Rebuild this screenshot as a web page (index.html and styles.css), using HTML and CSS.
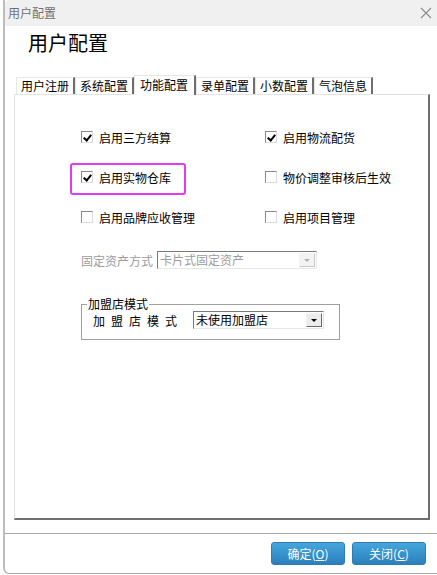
FILE: index.html
```html
<!DOCTYPE html>
<html lang="zh-CN">
<head>
<meta charset="utf-8">
<title>用户配置</title>
<link rel="stylesheet" href="styles.css">
</head>
<body>
<div class="window">
  <div class="titlebar">
    <span class="title">用户配置</span>
    <svg class="close" width="12" height="12" viewBox="0 0 12 12"><path d="M1 1 L11 11 M11 1 L1 11" stroke="#8a8a8a" stroke-width="1.1" fill="none"/></svg>
  </div>
  <div class="heading">用户配置</div>
  <div class="tabs">
    <div class="tab">用户注册</div>
    <div class="tab">系统配置</div>
    <div class="tab active">功能配置</div>
    <div class="tab">录单配置</div>
    <div class="tab">小数配置</div>
    <div class="tab">气泡信息</div>
  </div>
  <div class="panel">
    <div class="grid">
      <label class="opt"><span class="cb on"></span>启用三方结算</label>
      <label class="opt"><span class="cb on"></span>启用物流配货</label>
      <label class="opt mark"><span class="cb on"></span>启用实物仓库</label>
      <label class="opt"><span class="cb"></span>物价调整审核后生效</label>
      <label class="opt"><span class="cb"></span>启用品牌应收管理</label>
      <label class="opt"><span class="cb"></span>启用项目管理</label>
    </div>
    <div class="asset-row">
      <span class="asset-label">固定资产方式</span>
      <div class="select disabled asset-select">
        <span class="select-text">卡片式固定资产</span>
        <span class="drop"><span class="tri"></span></span>
      </div>
    </div>
    <fieldset class="group">
      <legend>加盟店模式</legend>
      <div class="group-row">
        <span class="group-label">加 盟 店 模 式</span>
        <div class="select join-select">
          <span class="select-text">未使用加盟店</span>
          <span class="drop"><span class="tri"></span></span>
        </div>
      </div>
    </fieldset>
  </div>
  <div class="footer">
    <button class="btn">确定(<u>O</u>)</button>
    <button class="btn">关闭(<u>C</u>)</button>
  </div>
</div>
</body>
</html>
```
FILE: styles.css
```css
* { box-sizing: border-box; }
html, body { margin: 0; padding: 0; background: #fff; }
body {
  font-family: "Noto Sans CJK SC", "Liberation Sans", sans-serif;
  font-size: 12px;
  color: #000;
}
.window {
  margin-left: 3px;
  width: 434px;
  height: 574px;
  border-left: 2px solid #bdbdbd;
  border-bottom: 1px solid #a8a8a8;
  border-bottom-left-radius: 6px;
  display: flex;
  flex-direction: column;
  overflow: hidden;
}
.titlebar {
  height: 26px;
  background: #f0f0f0;
  display: flex;
  align-items: center;
  justify-content: space-between;
  padding: 0 5px 0 3px;
  border-top-left-radius: 5px;
}
.title { color: #707070; font-size: 12px; line-height: 12px; }
.close { display: block; margin-top: -1px; }
.heading {
  margin: 7px 0 0 23px;
  font-size: 20px;
  line-height: 20px;
  height: 20px;
}
.tabs {
  margin: 22px 0 0 9px;
  padding-left: 2px;
  height: 19px;
  display: flex;
  align-items: flex-end;
}
.tab {
  height: 17px;
  line-height: 16px;
  padding: 0 4px 0 4px;
  border-left: 1px solid #e6e6e6;
  border-top: 1px solid #e6e6e6;
  border-right: 2px solid #6e6e6e;
  white-space: nowrap;
}
.tab.active {
  height: 20px;
  margin-bottom: -1px;
  padding: 1px 6px 0 5px;
  background: #fff;
  border-right: 2px solid #6e6e6e;
  position: relative;
  z-index: 1;
}
.panel {
  margin: 0 7px 0 9px;
  height: 426px;
  border-left: 1px solid #e3e3e3;
  border-top: 1px solid #e3e3e3;
  border-right: 2px solid #6f6f6f;
  border-bottom: 2px solid #6f6f6f;
  padding: 22px 0 0 66px;
}
.grid {
  display: grid;
  grid-template-columns: 184px 150px;
  grid-auto-rows: 40px;
}
.opt {
  display: flex;
  align-items: center;
  gap: 6px;
  position: relative;
  white-space: nowrap;
}
.mark::before {
  content: "";
  position: absolute;
  left: -11px;
  top: 6px;
  width: 112px;
  height: 28px;
  border: 2px solid #e23cf0;
  border-radius: 3px;
}
.cb {
  width: 12px;
  height: 12px;
  border-top: 1px solid #8a8a8a;
  border-left: 1px solid #8a8a8a;
  border-right: 1px solid #dcdcdc;
  border-bottom: 1px solid #dcdcdc;
  background: #fff;
  position: relative;
  flex: none;
}
.cb.on::after {
  content: "";
  position: absolute;
  left: 3px;
  top: 1px;
  width: 3px;
  height: 6px;
  border-right: 2px solid #000;
  border-bottom: 2px solid #000;
  transform: rotate(40deg);
}
.asset-row {
  margin-top: 14px;
  display: flex;
  align-items: center;
  gap: 4px;
  height: 18px;
}
.asset-label { color: #9c9c9c; }
.select {
  height: 18px;
  border-top: 1px solid #7a7a7a;
  border-left: 1px solid #7a7a7a;
  border-right: 1px solid #e6e6e6;
  border-bottom: 1px solid #e6e6e6;
  background: #fff;
  display: flex;
  align-items: center;
  justify-content: space-between;
  padding: 0 1px 0 2px;
}
.select-text { line-height: 16px; }
.asset-select { width: 160px; }
.disabled .select-text { color: #9c9c9c; }
.drop {
  width: 16px;
  height: 14px;
  border-top: 1px solid #f4f4f4;
  border-left: 1px solid #f4f4f4;
  border-right: 1px solid #6a6a6a;
  border-bottom: 1px solid #6a6a6a;
  background: #ececec;
  display: flex;
  align-items: center;
  justify-content: center;
}
.disabled .drop { border-right-color: #c8c8c8; border-bottom-color: #c8c8c8; background: #f3f3f3; }
.tri {
  width: 0;
  height: 0;
  border-left: 3px solid transparent;
  border-right: 3px solid transparent;
  border-top: 3px solid #000;
}
.disabled .tri { border-top-color: #b0b0b0; }
.group {
  margin: 29px 0 0 0;
  width: 259px;
  border: 1px solid #a0a0a0;
  padding: 1px 10px 10px 11px;
}
.group legend {
  margin-left: -6px;
  padding: 0 1px;
  line-height: 12px;
  font-size: 12px;
}
.group-row {
  display: flex;
  align-items: center;
  height: 18px;
}
.group-label {
  width: 100px;
  word-spacing: 3.3px;
  white-space: pre;
}
.join-select { width: 131px; }
.footer {
  margin-top: 13px;
  border-top: 1px solid #a8a8a8;
  margin-left: -2px;
  padding: 8px 11px 0 0;
  display: flex;
  justify-content: flex-end;
  gap: 7px;
  flex: 1;
}
.btn {
  width: 74px;
  height: 23px;
  border: 1px solid #2c7db3;
  border-radius: 3px;
  background: linear-gradient(#44a6dd, #2b80bb);
  color: #fff;
  font-family: "Noto Sans CJK SC", "Liberation Sans", sans-serif;
  font-size: 12px;
  padding: 0;
}
.btn u { text-decoration: underline; }
```
